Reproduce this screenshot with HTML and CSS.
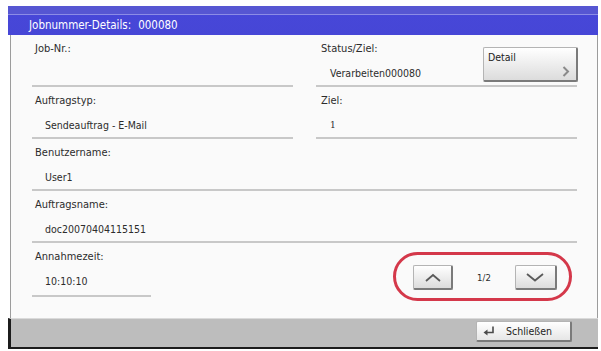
FILE: index.html
```html
<!DOCTYPE html>
<html lang="de">
<head>
<meta charset="utf-8">
<title>Jobnummer-Details</title>
<link rel="stylesheet" href="styles.css">
</head>
<body>
<div class="window">
  <div class="titlebar"><span>Jobnummer-Details:</span><span>000080</span></div>
  <div class="content">
    <div class="grid2">
      <div class="field">
        <div class="label">Job-Nr.:</div>
        <div class="value"></div>
      </div>
      <div class="field field-right field-status">
        <div class="stack">
          <div class="label">Status/Ziel:</div>
          <div class="value">Verarbeiten000080</div>
        </div>
        <button class="btn btn-detail"><span>Detail</span>
          <svg class="chev-right" width="8" height="11" viewBox="0 0 8 11"><path d="M1.5 1 L6 5.5 L1.5 10" fill="none" stroke="#8a8a8a" stroke-width="2"/></svg>
        </button>
      </div>
      <div class="field">
        <div class="label">Auftragstyp:</div>
        <div class="value">Sendeauftrag - E-Mail</div>
      </div>
      <div class="field field-right">
        <div class="label">Ziel:</div>
        <div class="value value-num">1</div>
      </div>
    </div>
    <div class="field">
      <div class="label">Benutzername:</div>
      <div class="value">User1</div>
    </div>
    <div class="field">
      <div class="label">Auftragsname:</div>
      <div class="value">doc20070404115151</div>
    </div>
    <div class="lastrow">
      <div class="field field-short">
        <div class="label">Annahmezeit:</div>
        <div class="value">10:10:10</div>
      </div>
      <div class="pager">
        <button class="btn pg-btn pg-up"><svg width="18" height="9" viewBox="0 0 18 9"><path d="M2 8 L9 2 L16 8" fill="none" stroke="#5a5a5a" stroke-width="1.8"/></svg></button>
        <span class="pg-count">1/2</span>
        <button class="btn pg-btn pg-down"><svg width="20" height="9" viewBox="0 0 20 9"><path d="M2 1 L10 7.5 L18 1" fill="none" stroke="#5a5a5a" stroke-width="1.8"/></svg></button>
      </div>
    </div>
  </div>
  <div class="footer">
    <button class="btn btn-close">
      <svg width="12" height="10" viewBox="0 0 12 10"><path d="M10 0.5 V6.5 H3.5" fill="none" stroke="#4a4a4a" stroke-width="1.6"/><path d="M0.5 6.5 L4.5 3.5 V9.5 Z" fill="#4a4a4a"/></svg>
      <span>Schließen</span>
    </button>
  </div>
</div>
</body>
</html>
```

FILE: styles.css
```css
html, body {
  margin: 0;
  padding: 0;
  background: #ffffff;
}

body {
  font-family: "DejaVu Sans Condensed", "DejaVu Sans", sans-serif;
  font-size: 10.5px;
  color: #2c2c2c;
}

.window {
  margin: 6px 0 0 8px;
  width: 590px;
  height: 343px;
  display: flex;
  flex-direction: column;
}

.titlebar {
  height: 29px;
  box-sizing: border-box;
  background: linear-gradient(#5656d2 0, #5656d2 8px, #8c8ce6 8px, #8c8ce6 9px, #4747d8 9px, #4646d6 100%);
  padding: 11px 0 0 21px;
  color: #ffffff;
  font-size: 11.5px;
  line-height: 16px;
  display: flex;
  gap: 7px;
}

.content {
  flex: 1;
  margin-left: 2px;
  border-left: 1px solid #9c9c9c;
  border-right: 1px solid #9c9c9c;
  background: #fafafa;
  padding: 0 20px 0 21px;
}

.grid2 {
  display: grid;
  grid-template-columns: 261px 261px;
  column-gap: 23px;
}

.field {
  height: 52px;
  box-sizing: border-box;
  border-bottom: 2px solid #c8c8c8;
}

.label {
  height: 26px;
  box-sizing: border-box;
  padding: 7px 0 0 3px;
  line-height: 14px;
  font-size: 11px;
}

.value {
  padding-left: 13px;
  line-height: 24px;
  height: 24px;
}

.field-right .label {
  padding-left: 5px;
}

.field-right .value {
  padding-left: 14px;
}

.value-num {
  font-family: "DejaVu Serif", serif;
  font-size: 9px;
}

.field-status {
  display: flex;
  justify-content: space-between;
  align-items: flex-start;
}

.btn {
  font: inherit;
  color: #222222;
  background: linear-gradient(#ffffff, #dcdcdc);
  border: 1px solid #b4b4b4;
  border-right: 2px solid #7a7a7a;
  border-bottom: 2px solid #7a7a7a;
  border-radius: 2px;
  padding: 0;
  box-sizing: border-box;
}

.btn-detail {
  margin-top: 12px;
  margin-right: -1px;
  width: 95px;
  height: 35px;
  display: flex;
  flex-direction: column;
  justify-content: space-between;
  align-items: flex-start;
  padding: 3px 6px 3px 4px;
}

.btn-detail .chev-right {
  align-self: flex-end;
}

.lastrow {
  display: flex;
  justify-content: space-between;
  align-items: flex-start;
}

.field-short {
  width: 119px;
  height: 54px;
}

.pager {
  margin-top: 9px;
  margin-right: 5px;
  width: 179px;
  height: 49px;
  box-sizing: border-box;
  border: 3px solid #d4384a;
  border-radius: 25px;
  display: flex;
  align-items: center;
  justify-content: space-between;
  padding: 2px 12px 0 17px;
}

.pg-btn {
  width: 40px;
  height: 25px;
  display: flex;
  align-items: center;
  justify-content: center;
}

.pg-down {
  width: 42px;
}

.pg-count {
  font-size: 9.5px;
}

.footer {
  height: 31px;
  box-sizing: border-box;
  background: #bdbdbd;
  border-left: 3px solid #1c1c1c;
  border-bottom: 2px solid #1c1c1c;
  border-top: 1px solid #dadada;
  display: flex;
  justify-content: flex-end;
  align-items: flex-start;
  padding: 2px 26px 0 0;
}

.btn-close {
  width: 96px;
  height: 21px;
  display: flex;
  align-items: center;
  gap: 11px;
  padding-left: 6px;
  background: linear-gradient(#ffffff, #e6e6e6);
}
```
